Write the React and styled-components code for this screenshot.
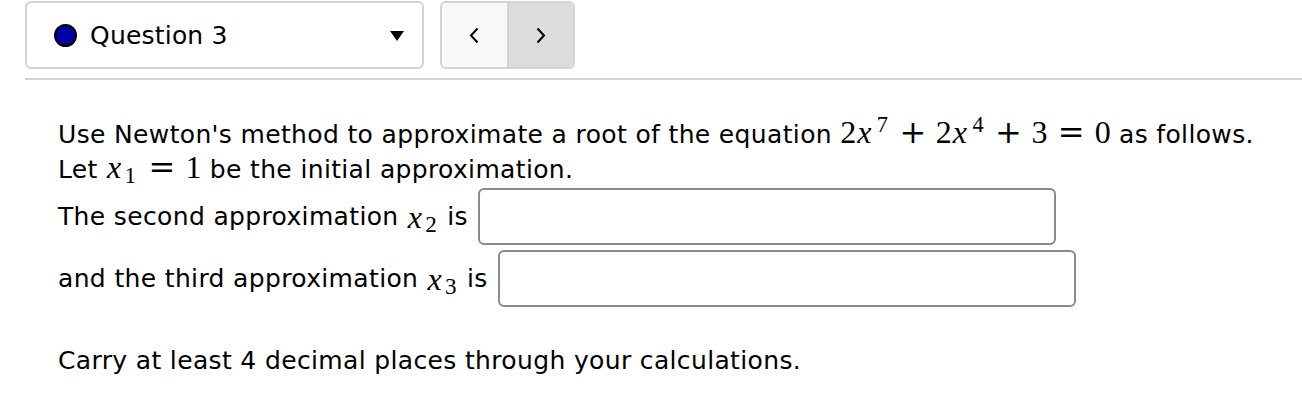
import React from 'react'
import styled, { createGlobalStyle } from 'styled-components'

const GlobalStyle = createGlobalStyle`
  body {
    margin: 0;
    background: #fff;
    font-family: "DejaVu Sans", sans-serif;
    color: #000;
  }
`;

const Page = styled.div`
  width: 1302px;
  height: 405px;
  padding-top: 1px;
  padding-left: 25px;
  box-sizing: border-box;
  overflow: hidden;
`;

const TopBar = styled.div`
  display: flex;
  align-items: stretch;
  gap: 16px;
  height: 68px;
`;

const Select = styled.div`
  width: 399px;
  box-sizing: border-box;
  border: 2px solid #d3d3d3;
  border-radius: 6px;
  display: flex;
  align-items: center;
  padding: 0 18px 0 27px;
  font-size: 25px;
  letter-spacing: 0.2px;
`;

const Dot = styled.span`
  width: 19px;
  height: 19px;
  border-radius: 50%;
  background: #0000a6;
  border: 2px solid #000;
  margin-right: 13px;
  flex-shrink: 0;
`;

const Label = styled.span`
  flex: 1;
`;

const Caret = styled.span`
  width: 0;
  height: 0;
  border-left: 7px solid transparent;
  border-right: 7px solid transparent;
  border-top: 10px solid #000;
  margin-top: 2px;
`;

const NavGroup = styled.div`
  display: flex;
  width: 135px;
  box-sizing: border-box;
  border: 2px solid #d3d3d3;
  border-radius: 6px;
  overflow: hidden;
`;

const NavButton = styled.div`
  flex: 1;
  display: flex;
  align-items: center;
  justify-content: center;
  background: ${p => (p.$active ? '#dcdcdc' : '#f8f8f8')};
  border-left: ${p => (p.$active ? '2px solid #d3d3d3' : 'none')};
`;

const Rule = styled.div`
  height: 2px;
  background: #d3d3d3;
  margin-top: 9px;
`;

const Content = styled.div`
  padding-left: 33px;
  padding-top: 36px;
  font-size: 25px;
  line-height: 32px;
  letter-spacing: 0.35px;
`;

const Para = styled.p`
  margin: 0;
`;

const Row = styled.div`
  display: flex;
  align-items: center;
  margin-top: ${p => p.$gap || 0}px;
`;

const Answer = styled.div`
  width: 578px;
  height: 57px;
  box-sizing: border-box;
  border: 2px solid #8a8a8a;
  border-radius: 6px;
  margin-left: 10px;
  flex-shrink: 0;
`;

const Note = styled.p`
  margin: 38px 0 0;
`;

const M = styled.span`
  font-family: "Liberation Serif", "DejaVu Serif", serif;
  font-size: 1.28em;
  line-height: 1;
  letter-spacing: 0;
  white-space: nowrap;
`;

const V = styled.i`
  font-style: italic;
  padding: 0 0.1em 0 0.03em;
`;

const Sub = styled.sub`
  font-size: 0.72em;
  vertical-align: -0.2em;
  line-height: 0;
  padding-right: 0.1em;
`;

const Sup = styled.sup`
  font-size: 0.7em;
  vertical-align: 0.5em;
  line-height: 0;
  padding: 0 0.08em 0 0.1em;
`;

const Op = styled.span`
  font-family: "DejaVu Serif", serif;
  margin: 0 ${p => (p.$rel ? 0.32 : 0.3)}em;
`;

const Chevron = ({ dir }) => (
  <svg width="12" height="17" viewBox="0 0 12 17">
    <path
      d={dir === 'left' ? 'M9.5 1.5 L3 8.5 L9.5 15.5' : 'M2.5 1.5 L9 8.5 L2.5 15.5'}
      fill="none"
      stroke="#000"
      strokeWidth="2"
    />
  </svg>
);

export default function App() {
  return (
    <Page>
      <GlobalStyle />
      <TopBar>
        <Select>
          <Dot />
          <Label>Question 3</Label>
          <Caret />
        </Select>
        <NavGroup>
          <NavButton><Chevron dir="left" /></NavButton>
          <NavButton $active><Chevron dir="right" /></NavButton>
        </NavGroup>
      </TopBar>
      <Rule />
      <Content>
        <Para>
          Use Newton's method to approximate a root of the equation{' '}
          <M>
            2<V>x</V><Sup>7</Sup><Op>+</Op>2<V>x</V><Sup>4</Sup><Op>+</Op>3<Op $rel>=</Op>0
          </M>{' '}
          as follows.
          <br />
          Let <M><V>x</V><Sub>1</Sub><Op $rel>=</Op>1</M> be the initial approximation.
        </Para>
        <Row $gap={2}>
          The second approximation&nbsp;<M><V>x</V><Sub>2</Sub></M>&nbsp;is
          <Answer />
        </Row>
        <Row $gap={5}>
          and the third approximation&nbsp;<M><V>x</V><Sub>3</Sub></M>&nbsp;is
          <Answer />
        </Row>
        <Note>Carry at least 4 decimal places through your calculations.</Note>
      </Content>
    </Page>
  );
}
